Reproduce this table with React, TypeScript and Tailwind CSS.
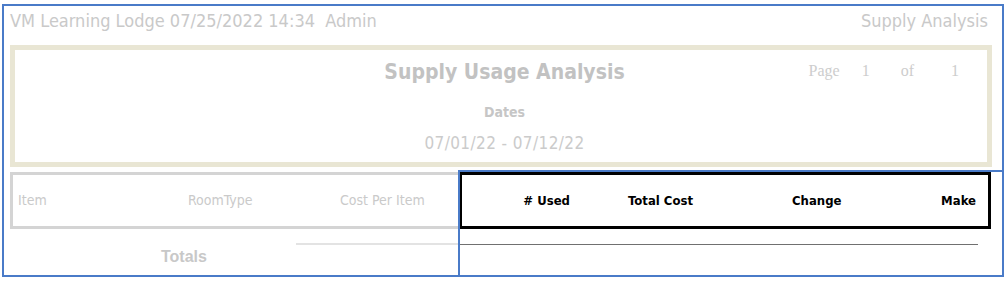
const sans = "font-['DejaVu_Sans_Condensed','DejaVu_Sans',sans-serif] font-stretch-condensed";

const grayCols = [
  { label: "Item", cls: "w-[175px] pl-[5px]" },
  { label: "RoomType", cls: "w-[152px]" },
  { label: "Cost Per Item", cls: "flex-1" },
];

export default function App() {
  return (
    <div className={`relative w-[1008px] h-[282px] bg-white overflow-hidden ${sans}`}>
      <div className="pl-[10px]">
        {/* top line: lodge / timestamp / user and report name */}
        <div className="h-[45px] flex justify-between items-start pt-[11px] pr-[20px] text-[18px] leading-[20px] text-[#c9c9c9]">
          <span className="whitespace-pre">VM Learning Lodge 07/25/2022 14:34  Admin</span>
          <span>Supply Analysis</span>
        </div>

        {/* report title block */}
        <div className="w-[982px] h-[122px] border-[5px] border-[#e9e6d4] flex flex-col items-center">
          <div className="w-full grid grid-cols-[1fr_auto_1fr] items-center mt-[10px] pl-[7px]">
            <div />
            <h1 className="text-[21px] leading-[24px] font-bold text-[#c2c2c2]">Supply Usage Analysis</h1>
            <div className="flex justify-end pr-[28px] font-['Liberation_Serif',serif] text-[16px] leading-[20px] text-[#cdcdcd] -mt-[3px]">
              <span>Page</span>
              <span className="ml-[22px]">1</span>
              <span className="ml-[31px]">of</span>
              <span className="ml-[37px]">1</span>
            </div>
          </div>
          <div className="mt-[19px] pl-[7px] text-[14px] leading-[18px] font-bold text-[#c6c6c6]">Dates</div>
          <div className="mt-[12px] pl-[7px] text-[17px] leading-[20px] tracking-[0.4px] text-[#cbcbcb]">07/01/22 - 07/12/22</div>
        </div>

        {/* column headers */}
        <div className="mt-[5px] w-[981px] h-[57px] flex">
          <div className="w-[449px] flex items-center border-[3px] border-r-0 border-[#d4d4d4] text-[14px] text-[#cacaca]">
            {grayCols.map((c) => (
              <div key={c.label} className={c.cls}>
                {c.label}
              </div>
            ))}
          </div>
          <div className="flex-1 flex items-center border-[3px] border-black text-[13px] font-bold text-black">
            <div className="w-[108px] text-right"># Used</div>
            <div className="w-[222px] pl-[58px]">Total Cost</div>
            <div className="flex-1">Change</div>
            <div className="pr-[12px]">Make</div>
          </div>
        </div>

        {/* totals rule */}
        <div className="mt-[14px] ml-[286px] w-[682px] h-[2px] flex items-center">
          <div className="w-[163px] h-[2px] bg-[#e3e3e3]" />
          <div className="flex-1 h-px bg-[#707070]" />
        </div>
        <div className="mt-[4px] pl-[151px] font-['Liberation_Sans',sans-serif] font-bold text-[16px] leading-[16px] text-[#c8c8c8]">
          Totals
        </div>
      </div>

      {/* selection outlines */}
      <div className="absolute left-[2px] top-[4px] w-[1002px] h-[273px] border-2 border-[#4a7bc8] pointer-events-none" />
      <div className="absolute left-[458px] top-[170px] w-[546px] h-[107px] border-2 border-[#4a7bc8] pointer-events-none" />
    </div>
  );
}
